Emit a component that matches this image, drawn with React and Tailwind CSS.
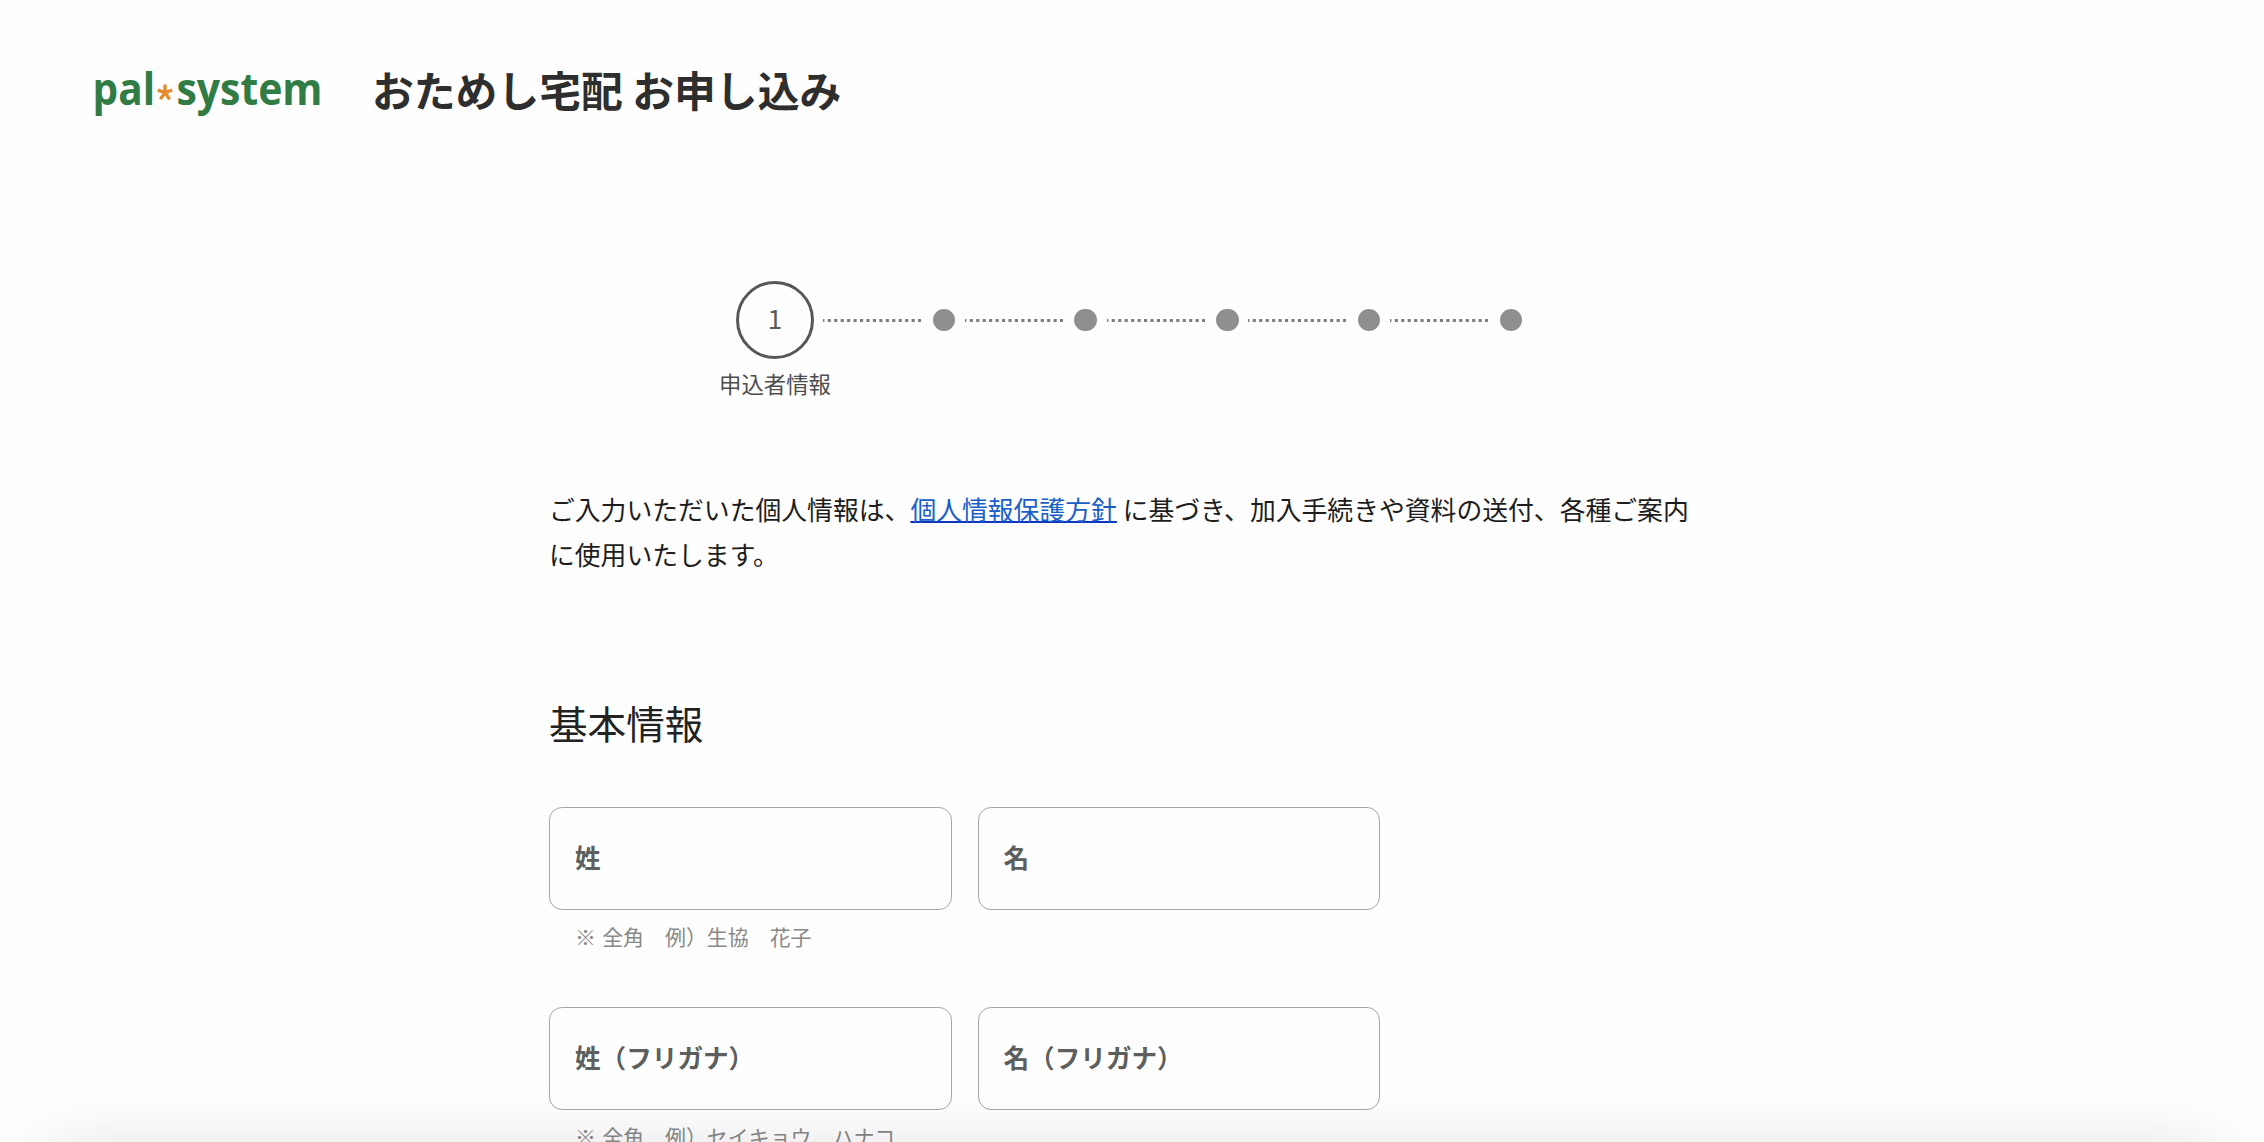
const STEPS = [2, 3, 4, 5, 6];

function Logo() {
  return (
    <svg width="236" height="80" viewBox="0 -10 236 80" className="block shrink-0" aria-label="pal*system">
      <g fill="#317c44" fontFamily='"Open Sans", "Noto Sans", sans-serif' fontWeight="700" fontSize="45">
        <text x="-0.5" y="44.3" textLength="62.5" lengthAdjust="spacingAndGlyphs">pal</text>
        <text x="83.5" y="44.3" textLength="146" lengthAdjust="spacingAndGlyphs">system</text>
      </g>
      <g stroke="#e58a2e" strokeWidth="3.4" strokeLinecap="butt">
        <path d="M72 31.6V23.6M72 31.6L64.8 29.2M72 31.6L79.2 29.2M72 31.6L67.4 38.2M72 31.6L76.6 38.2" fill="none" />
      </g>
    </svg>
  );
}

function DottedLine() {
  return (
    <svg width="98" height="3" viewBox="0 0 98 3" className="block shrink-0">
      <path d="M0 1.5H98" stroke="#7d7d7d" strokeWidth="3" strokeDasharray="3.1 3.35" strokeDashoffset="1.7" />
    </svg>
  );
}

function Field({ label }) {
  return (
    <div className="flex h-[103px] w-[402.5px] items-center rounded-[13px] border-[1.3px] border-[#a6a6a6] pb-[2px] pl-[25px] text-[25.6px] font-bold text-[#5c5f5d]">
      {label}
    </div>
  );
}

function FieldRow({ labels, hint }) {
  return (
    <div className="h-[200px]">
      <div className="flex gap-[26px]">
        {labels.map((l) => (
          <Field key={l} label={l} />
        ))}
      </div>
      <p className="mt-[10px] pl-[26px] text-[20.95px] leading-[32px] [word-spacing:1.5px] whitespace-pre text-[#888]">{hint}</p>
    </div>
  );
}

export default function App() {
  return (
    <div className="relative h-screen w-full overflow-hidden bg-[#fefefe] font-['Noto_Sans_CJK_JP',sans-serif]" lang="ja">
      <header className="flex h-[182px] items-start pt-[51px] pl-[93px]">
        <Logo />
        <h1 className="mt-[6px] ml-[43px] text-[41.8px] leading-[64px] font-bold text-[#2e2e2e]">おためし宅配 お申し込み</h1>
      </header>

      <main className="ml-[549px] w-[1166px]">
        <div className="flex h-[304px] pt-[99px] pl-[170px]">
          <div className="flex w-[112px] shrink-0 flex-col items-center">
            <div className="flex h-[78px] w-[78px] items-center justify-center rounded-full border-[3px] border-[#575757] pb-[5px] text-[26px] leading-none text-[#5a5a5a]">
              1
            </div>
            <div className="mt-[8px] text-[22.4px] leading-[32px] whitespace-nowrap text-[#4d4d4d]">申込者情報</div>
          </div>
          <div className="-ml-[8px] flex h-[78px] items-center">
            {STEPS.map((s) => (
              <div key={s} className="flex w-[141.75px] shrink-0 items-center">
                <DottedLine />
                <span className="ml-[11.5px] h-[22.5px] w-[22.5px] shrink-0 rounded-full bg-[#8f8f8f]" />
              </div>
            ))}
          </div>
        </div>

        <p className="h-[202px] text-[25.82px] leading-[45px] whitespace-nowrap text-[#1d1d1d]">
          ご入力いただいた個人情報は、
          <a href="#privacy" className="text-[#1a5fc8] underline decoration-[#1034c4] decoration-[1.5px]">個人情報保護方針</a>
          {" "}に基づき、加入手続きや資料の送付、各種ご案内
          <br />
          に使用いたします。
        </p>

        <h2 className="h-[119px] pt-[6px] text-[38.6px] leading-[56px] text-[#222]">基本情報</h2>

        <FieldRow labels={["姓", "名"]} hint={"※ 全角　例）生協　花子"} />
        <FieldRow labels={["姓（フリガナ）", "名（フリガナ）"]} hint={"※ 全角　例）セイキョウ　ハナコ"} />
      </main>

      <div className="pointer-events-none absolute top-full right-[42px] left-[42px] h-[160px] rounded-[40px] shadow-[0_6px_64px_rgba(0,0,0,0.12)]" />
    </div>
  );
}
